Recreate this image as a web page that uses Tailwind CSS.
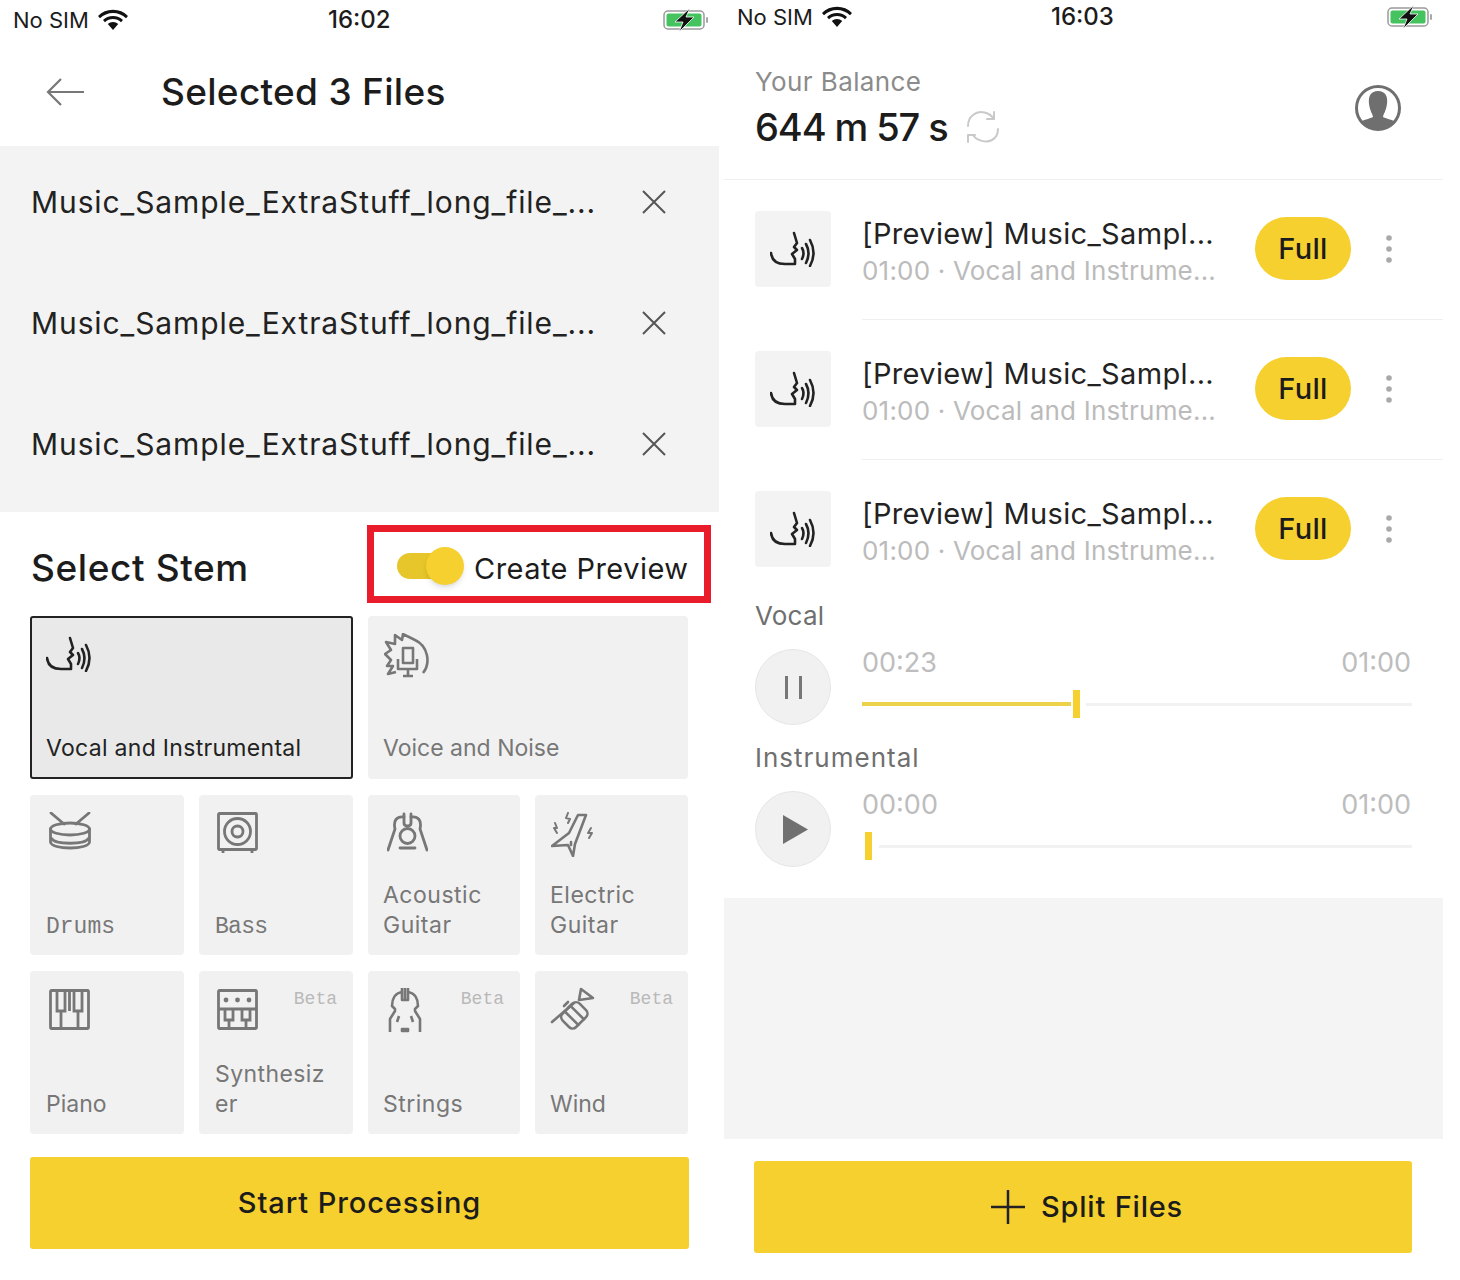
<!DOCTYPE html>
<html lang="en">
<head>
  <meta charset="UTF-8" />
  <meta name="viewport" content="width=device-width, initial-scale=1.0"/>
  <title>Stem Splitter</title>
  <script src="https://cdn.jsdelivr.net/npm/@tailwindcss/browser@4"></script>
</head>
<body class="bg-white font-['Inter',sans-serif] text-[#1c1c1c]">
  <svg class="hidden">
    <defs>
      <symbol id="speak" viewBox="0 0 46 36"><g fill="none" stroke="currentColor" stroke-width="2.600" stroke-linecap="round" stroke-linejoin="round"><path d="M1 22C2 30 8 33 15 33H25V28L22 23L27 19L24 16L27 12L24 2"/><path d="M32 17q3 5 0 11"/><path d="M36 13q5 9 0 19"/><path d="M40 9q7 13 0 26"/></g></symbol>
      <symbol id="wifi" viewBox="0 0 30 22"><path fill="currentColor" d="M15 4C20 4 24.500 6 28 9.300L30 7C26 3 21 .8 15 .8S4 3 0 7L2 9.300C5.500 6 10 4 15 4ZM15 10C18 10 20.800 11.200 23 13.200L25 11C22.300 8.400 19 7 15 7S7.700 8.400 5 11L7 13.200C9.200 11.200 12 10 15 10ZM15 13C13 13 11.200 13.800 9.800 15L15 21L20.200 15C18.800 13.800 17 13 15 13Z"/></symbol>
      <symbol id="battery" viewBox="0 0 46 24"><rect x="1" y="3" width="40" height="18" rx="4" fill="none" stroke="#9a9a9a" stroke-width="1.500"/><rect x="3.500" y="5.500" width="35" height="13" rx="2" fill="#44c35f"/><rect x="43" y="9" width="2" height="6" rx="1" fill="#a8a8a8"/><path d="M27 0L12 14H20L16 24L31 9H23Z" fill="#111" stroke="#fff" stroke-width=".8"/></symbol>
      <symbol id="close" viewBox="0 0 24 24"><path d="M1 1L23 23M23 1L1 23" fill="none" stroke="currentColor" stroke-width="2"/></symbol>
      <symbol id="dots" viewBox="0 0 6 28"><circle cx="3" cy="3" r="2.800" fill="#a9a9a9"/><circle cx="3" cy="14" r="2.800" fill="#a9a9a9"/><circle cx="3" cy="25" r="2.800" fill="#a9a9a9"/></symbol>
    </defs>
  </svg>

  <div class="flex w-[1460px] h-[1280px] overflow-hidden">
    <!-- first phone -->
    <div class="w-[719px] shrink-0">
      <div class="h-[40px] relative flex items-center pl-[13px] pr-[10px] justify-between">
        <div class="flex items-center gap-[9px]">
          <span class="text-[22px] leading-none">No SIM</span>
          <svg class="w-[30px] h-[22px] text-[#111]"><use href="#wifi"/></svg>
        </div>
        <span class="absolute left-[328px] text-[24px] font-medium leading-none">16:02</span>
        <svg class="w-[46px] h-[24px]"><use href="#battery"/></svg>
      </div>
      <div class="h-[106px] flex items-center pl-[46px] pb-[4px]">
        <svg class="w-[39px] h-[30px] text-[#777] mr-[76px] translate-y-[1px]" viewBox="0 0 39 30"><path d="M38 15H2M15 2L2 15L15 28" fill="none" stroke="currentColor" stroke-width="2.200"/></svg>
        <h1 class="text-[37px] font-medium tracking-[0.3px] leading-none">Selected 3 Files</h1>
      </div>
      <div class="h-[366px] bg-[#f3f3f3] pt-[40px] flex flex-col gap-[89px] pl-[31px]">
        <div class="h-[32px] flex items-center"><span class="w-[611px] text-[30px] tracking-[0.9px] leading-none text-[#222]">Music_Sample_ExtraStuff_long_file_...</span><svg class="w-[24px] h-[24px] text-[#555]"><use href="#close"/></svg></div>
        <div class="h-[32px] flex items-center"><span class="w-[611px] text-[30px] tracking-[0.9px] leading-none text-[#222]">Music_Sample_ExtraStuff_long_file_...</span><svg class="w-[24px] h-[24px] text-[#555]"><use href="#close"/></svg></div>
        <div class="h-[32px] flex items-center"><span class="w-[611px] text-[30px] tracking-[0.9px] leading-none text-[#222]">Music_Sample_ExtraStuff_long_file_...</span><svg class="w-[24px] h-[24px] text-[#555]"><use href="#close"/></svg></div>
      </div>
      <div class="flex items-center justify-between pl-[31px] pr-[8px] mt-[13px] mb-[13px]">
        <h2 class="text-[37px] font-medium tracking-[0.6px] leading-none mt-[6px]">Select Stem</h2>
        <div class="w-[344px] h-[78px] border-[7px] border-[#e91c2b] flex items-center pl-[23px] pt-[4px]">
          <div class="relative w-[67px] h-[38px] flex items-center mr-[10px]">
            <div class="w-[53px] h-[26px] rounded-full bg-[#e6c62a]"></div>
            <div class="absolute left-[29px] top-0 w-[38px] h-[38px] rounded-full bg-[#f6d02f] shadow-md"></div>
          </div>
          <span class="text-[29px] tracking-[0.45px] leading-none mt-[4px]">Create Preview</span>
        </div>
      </div>

      <div class="pl-[30px] w-[689px] grid grid-cols-[154px_154px_152px_153px] gap-x-[15px] gap-y-[16px] text-[#777]">
        <div class="col-span-2 h-[163px] rounded-[3px] bg-[#e9e9e9] border-2 border-[#222] pl-[14px] pt-[18px] pb-[14px] flex flex-col justify-between text-[#222]">
          <svg class="w-[46px] h-[36px]"><use href="#speak"/></svg>
          <span class="text-[23px] tracking-[0.3px] leading-[30px]">Vocal and Instrumental</span>
        </div>
        <div class="col-span-2 h-[163px] rounded-[4px] bg-[#f1f1f1] pl-[15px] pt-[17px] pb-[16px] flex flex-col justify-between">
          <svg class="w-[46px] h-[45px] ml-[1px]" viewBox="0 0 46 45"><g fill="none" stroke="currentColor" stroke-width="2.600" stroke-linejoin="round"><path d="M39 40C47 30 44 13 31 7L19 1L18 7L11 2V11L2 9L7 17L1 21L7 27L3 33H9L4 41L12 39"/><rect x="19" y="15" width="10" height="15"/><path d="M14 26V36H33V26M24 36V43M19 43H29"/></g></svg>
          <span class="text-[23px] leading-[30px]">Voice and Noise</span>
        </div>

        <div class="h-[160px] rounded-[4px] bg-[#f1f1f1] pl-[16px] pt-[17px] pb-[13px] flex flex-col justify-between">
          <svg class="w-[42px] h-[41px] ml-[3px]" viewBox="0 0 42 41"><g fill="none" stroke="currentColor" stroke-width="2.800" stroke-linecap="round"><ellipse cx="21" cy="17" rx="19.500" ry="6"/><path d="M1.500 17V30C2 38 40 38 40.500 30V17M2 26C6 33 36 33 40 26M2 1L15 12M40 1L27 12"/></g></svg>
          <span class="font-['Liberation_Mono',monospace] text-[23px] leading-[30px]">Drums</span>
        </div>
        <div class="h-[160px] rounded-[4px] bg-[#f1f1f1] pl-[16px] pt-[17px] pb-[13px] flex flex-col justify-between">
          <svg class="w-[41px] h-[41px] ml-[2px]" viewBox="0 0 41 41"><g fill="none" stroke="currentColor" stroke-width="2.800"><rect x="1.500" y="1.500" width="38" height="36" rx="1"/><circle cx="20.500" cy="19.500" r="13"/><circle cx="20.500" cy="19.500" r="5.500"/><path d="M6 38V41M35 38V41"/></g></svg>
          <span class="font-['Liberation_Mono',monospace] text-[23px] tracking-[-0.7px] leading-[30px]">Bass</span>
        </div>
        <div class="h-[160px] rounded-[4px] bg-[#f1f1f1] pl-[15px] pt-[17px] pb-[15px] flex flex-col justify-between">
          <svg class="w-[41px] h-[41px] ml-[4px]" viewBox="0 0 41 41"><g fill="none" stroke="currentColor" stroke-width="2.800" stroke-linecap="round"><path d="M17 2V11C17 15 24 15 24 11V2"/><path d="M17 5C10 4 6 8 8 17L1 38M24 5C31 4 35 8 33 17L40 38"/><circle cx="20.500" cy="24" r="7.500"/><path d="M13 36H28"/></g></svg>
          <span class="text-[23px] tracking-[0.5px] leading-[30px]">Acoustic<br/>Guitar</span>
        </div>
        <div class="h-[160px] rounded-[4px] bg-[#f1f1f1] pl-[15px] pt-[17px] pb-[15px] flex flex-col justify-between">
          <svg class="w-[45px] h-[45px] ml-[1px]" viewBox="0 0 45 45"><g fill="none" stroke="currentColor" stroke-width="2.600" stroke-linejoin="round" stroke-linecap="round"><path d="M27 3H35L24 32L22 44L17 33L1 34L18 21Z"/><path d="M20 30V33"/><path d="M17 1L15 6L19 7L17 11M4 11L6 16L3 16L6 21M40 16L37 21L41 21L38 26" stroke-width="2"/></g></svg>
          <span class="text-[23px] tracking-[0.5px] leading-[30px]">Electric<br/>Guitar</span>
        </div>

        <div class="h-[163px] rounded-[4px] bg-[#f1f1f1] pl-[16px] pt-[18px] pb-[15px] flex flex-col justify-between">
          <svg class="w-[41px] h-[41px] ml-[3px]" viewBox="0 0 41 41"><g fill="none" stroke="currentColor" stroke-width="2.800"><rect x="1.500" y="1.500" width="38" height="38" rx="1"/><path d="M8 2V22H16V2M25 2V22H33V2M12 22V39M29 22V39M20.500 2V22"/></g></svg>
          <span class="text-[23px] leading-[30px]">Piano</span>
        </div>
        <div class="relative h-[163px] rounded-[4px] bg-[#f1f1f1] pl-[16px] pt-[18px] pb-[15px] flex flex-col justify-between">
          <span class="absolute right-[16px] top-[19px] font-['Liberation_Mono',monospace] text-[18px] leading-none text-[#b9b9b9]">Beta</span>
          <svg class="w-[41px] h-[41px] ml-[2px]" viewBox="0 0 41 41"><g fill="none" stroke="currentColor" stroke-width="2.800"><rect x="1.500" y="1.500" width="38" height="38" rx="1"/><path d="M2 20H39M8 20V31H16V20M25 20V31H33V20M12 31V39M29 31V39"/></g><g fill="currentColor"><circle cx="9" cy="11" r="2.400"/><circle cx="20.500" cy="11" r="2.400"/><circle cx="32" cy="11" r="2.400"/></g></svg>
          <span class="text-[23px] tracking-[0.4px] leading-[30px] w-[113px] break-all">Synthesizer</span>
        </div>
        <div class="relative h-[163px] rounded-[4px] bg-[#f1f1f1] pl-[15px] pt-[15px] pb-[15px] flex flex-col justify-between">
          <span class="absolute right-[16px] top-[19px] font-['Liberation_Mono',monospace] text-[18px] leading-none text-[#b9b9b9]">Beta</span>
          <svg class="w-[40px] h-[47px] ml-[4px]" viewBox="0 0 40 47"><g fill="none" stroke="currentColor" stroke-width="2.600" stroke-linejoin="round"><path d="M15 2V14H21V2M18 2V14"/><path d="M15 6C8 7 5 13 5 20L8 23V25L3 33V46M21 6C28 7 31 13 31 20L28 23V25L33 33V46"/><path d="M12 30L10 36M24 30L26 36"/><path d="M15 43H21V45H15Z" fill="currentColor"/></g></svg>
          <span class="text-[23px] tracking-[0.5px] leading-[30px]">Strings</span>
        </div>
        <div class="relative h-[163px] rounded-[4px] bg-[#f1f1f1] pl-[15px] pt-[16px] pb-[15px] flex flex-col justify-between">
          <span class="absolute right-[15px] top-[19px] font-['Liberation_Mono',monospace] text-[18px] leading-none text-[#b9b9b9]">Beta</span>
          <svg class="w-[46px] h-[45px]" viewBox="0 0 46 45"><g fill="none" stroke="currentColor" stroke-width="2.600" stroke-linejoin="round" stroke-linecap="round"><path d="M31 2L43 11L29 13Z"/><path d="M2 35L24 16"/><g transform="rotate(-45 24 28)"><rect x="12" y="19" width="24" height="19" rx="5"/><path d="M20 19V38M28 19V38"/></g><path d="M14 19L18 15M18 21L22 17"/></g></svg>
          <span class="text-[23px] leading-[30px]">Wind</span>
        </div>
      </div>

      <div class="ml-[30px] mt-[23px] w-[659px] h-[92px] rounded-[3px] bg-[#f6d02f] flex items-center justify-center text-[29px] tracking-[0.9px] font-medium">Start Processing</div>
    </div>

    <!-- second phone -->
    <div class="w-[719px] ml-[5px] shrink-0">
      <div class="h-[33px] relative flex items-center pl-[13px] pr-[10px] justify-between">
        <div class="flex items-center gap-[9px]">
          <span class="text-[22px] leading-none">No SIM</span>
          <svg class="w-[30px] h-[22px] text-[#111]"><use href="#wifi"/></svg>
        </div>
        <span class="absolute left-[327px] text-[24px] font-medium leading-none">16:03</span>
        <svg class="w-[46px] h-[24px]"><use href="#battery"/></svg>
      </div>
      <div class="h-[147px] border-b border-[#efefef] pl-[31px] pr-[42px] flex items-center justify-between pt-[2px]">
        <div>
          <div class="text-[26px] tracking-[0.4px] leading-none text-[#8b8b8b] mb-[13px]">Your Balance</div>
          <div class="flex items-center">
            <span class="text-[38px] tracking-[-1.1px] font-medium leading-none mr-[18px]">644 m 57 s</span>
            <svg class="w-[34px] h-[34px] text-[#c9c9c9]" viewBox="0 0 34 34"><g fill="none" stroke="currentColor" stroke-width="2" stroke-linecap="round" stroke-linejoin="round"><path d="M28 9C24 3 14 -1 7 5C3 8 2 12 2 16"/><path d="M32 19C32 24 30 28 26 30C20 33 11 31 7 25"/><path d="M28 2V9H21M2 32V25H9"/></g></svg>
          </div>
        </div>
        <svg class="w-[46px] h-[46px] mt-[2px]" viewBox="0 0 46 46"><circle cx="23" cy="23" r="21.500" fill="#fff" stroke="#6f6f6f" stroke-width="3"/><path d="M23 6C30 6 33 11 32 19C31 26 28 30 28 32C32 34 38 35 41 37C37 42 30 45 23 45S9 42 5 37C8 35 14 34 18 32C18 30 15 26 14 19C13 11 16 6 23 6Z" fill="#6f6f6f"/></svg>
      </div>

      <div class="h-[140px] pt-[31px] pl-[31px] flex">
        <div class="w-[76px] h-[76px] rounded-[4px] bg-[#f3f3f3] flex items-center justify-center shrink-0 text-[#222]"><svg class="w-[46px] h-[36px]"><use href="#speak"/></svg></div>
        <div class="ml-[31px] flex-1 border-b border-[#efefef] flex pr-[50px] h-[109px] items-start">
          <div class="w-[393px] pt-[4px]">
            <div class="text-[29px] tracking-[0.35px] leading-[38px] text-[#222]">[Preview] Music_Sampl...</div>
            <div class="text-[26px] tracking-[0.2px] leading-[36px] text-[#bbb]">01:00 · Vocal and Instrume...</div>
          </div>
          <div class="w-[96px] h-[63px] mt-[6px] rounded-full bg-[#f6d02f] flex items-center justify-center text-[29px] tracking-[0.3px] font-medium">Full</div>
          <svg class="w-[6px] h-[28px] ml-[35px] mt-[24px]"><use href="#dots"/></svg>
        </div>
      </div>
      <div class="h-[140px] pt-[31px] pl-[31px] flex">
        <div class="w-[76px] h-[76px] rounded-[4px] bg-[#f3f3f3] flex items-center justify-center shrink-0 text-[#222]"><svg class="w-[46px] h-[36px]"><use href="#speak"/></svg></div>
        <div class="ml-[31px] flex-1 border-b border-[#efefef] flex pr-[50px] h-[109px] items-start">
          <div class="w-[393px] pt-[4px]">
            <div class="text-[29px] tracking-[0.35px] leading-[38px] text-[#222]">[Preview] Music_Sampl...</div>
            <div class="text-[26px] tracking-[0.2px] leading-[36px] text-[#bbb]">01:00 · Vocal and Instrume...</div>
          </div>
          <div class="w-[96px] h-[63px] mt-[6px] rounded-full bg-[#f6d02f] flex items-center justify-center text-[29px] tracking-[0.3px] font-medium">Full</div>
          <svg class="w-[6px] h-[28px] ml-[35px] mt-[24px]"><use href="#dots"/></svg>
        </div>
      </div>
      <div class="h-[141px] pt-[31px] pl-[31px] flex">
        <div class="w-[76px] h-[76px] rounded-[4px] bg-[#f3f3f3] flex items-center justify-center shrink-0 text-[#222]"><svg class="w-[46px] h-[36px]"><use href="#speak"/></svg></div>
        <div class="ml-[31px] flex-1 flex pr-[50px] items-start">
          <div class="w-[393px] pt-[4px]">
            <div class="text-[29px] tracking-[0.35px] leading-[38px] text-[#222]">[Preview] Music_Sampl...</div>
            <div class="text-[26px] tracking-[0.2px] leading-[36px] text-[#bbb]">01:00 · Vocal and Instrume...</div>
          </div>
          <div class="w-[96px] h-[63px] mt-[6px] rounded-full bg-[#f6d02f] flex items-center justify-center text-[29px] tracking-[0.3px] font-medium">Full</div>
          <svg class="w-[6px] h-[28px] ml-[35px] mt-[24px]"><use href="#dots"/></svg>
        </div>
      </div>

      <div class="pl-[31px] pr-[31px] h-[142px]">
        <div class="text-[26px] tracking-[0.2px] leading-[30px] text-[#6f6f6f]">Vocal</div>
        <div class="flex mt-[18px]">
          <div class="w-[76px] h-[76px] rounded-full bg-[#f1f1f1] border border-[#e6e6e6] flex items-center justify-center gap-[11px]">
            <div class="w-[3px] h-[23px] bg-[#777]"></div><div class="w-[3px] h-[23px] bg-[#777]"></div>
          </div>
          <div class="ml-[31px] flex-1">
            <div class="flex justify-between text-[27px] leading-[28px] text-[#bdbdbd] pr-[1px]"><span>00:23</span><span>01:00</span></div>
            <div class="relative h-[28px] mt-[13px] flex items-center">
              <div class="w-[209px] h-[4px] bg-[#ecd24a]"></div>
              <div class="w-[7px] h-[28px] ml-[2px] bg-[#f6d02f]"></div>
              <div class="flex-1 h-[3px] ml-[6px] bg-[#f2f2f2]"></div>
            </div>
          </div>
        </div>
      </div>
      <div class="pl-[31px] pr-[31px] h-[155px]">
        <div class="text-[26px] tracking-[1px] leading-[30px] text-[#6f6f6f]">Instrumental</div>
        <div class="flex mt-[18px]">
          <div class="w-[76px] h-[76px] rounded-full bg-[#f1f1f1] border border-[#e6e6e6] flex items-center justify-center">
            <svg class="w-[25px] h-[29px] ml-[4px]" viewBox="0 0 25 29"><path d="M0 0L25 14.500L0 29Z" fill="#707070"/></svg>
          </div>
          <div class="ml-[31px] flex-1">
            <div class="flex justify-between text-[27px] leading-[28px] text-[#bdbdbd] pr-[1px]"><span>00:00</span><span>01:00</span></div>
            <div class="relative h-[28px] mt-[13px] flex items-center">
              <div class="w-[7px] h-[28px] ml-[3px] bg-[#f6d02f]"></div>
              <div class="flex-1 h-[3px] ml-[7px] bg-[#f2f2f2]"></div>
            </div>
          </div>
        </div>
      </div>

      <div class="h-[241px] bg-[#f4f4f4]"></div>
      <div class="ml-[30px] mt-[22px] w-[658px] h-[92px] rounded-[3px] bg-[#f6d02f] flex items-center justify-center gap-[16px] pl-[8px] text-[29px] tracking-[0.8px] font-medium">
        <svg class="w-[34px] h-[34px]" viewBox="0 0 34 34"><path d="M17 0V34M0 17H34" fill="none" stroke="#222" stroke-width="2.500"/></svg>
        <span>Split Files</span>
      </div>
    </div>
  </div>
</body>
</html>
